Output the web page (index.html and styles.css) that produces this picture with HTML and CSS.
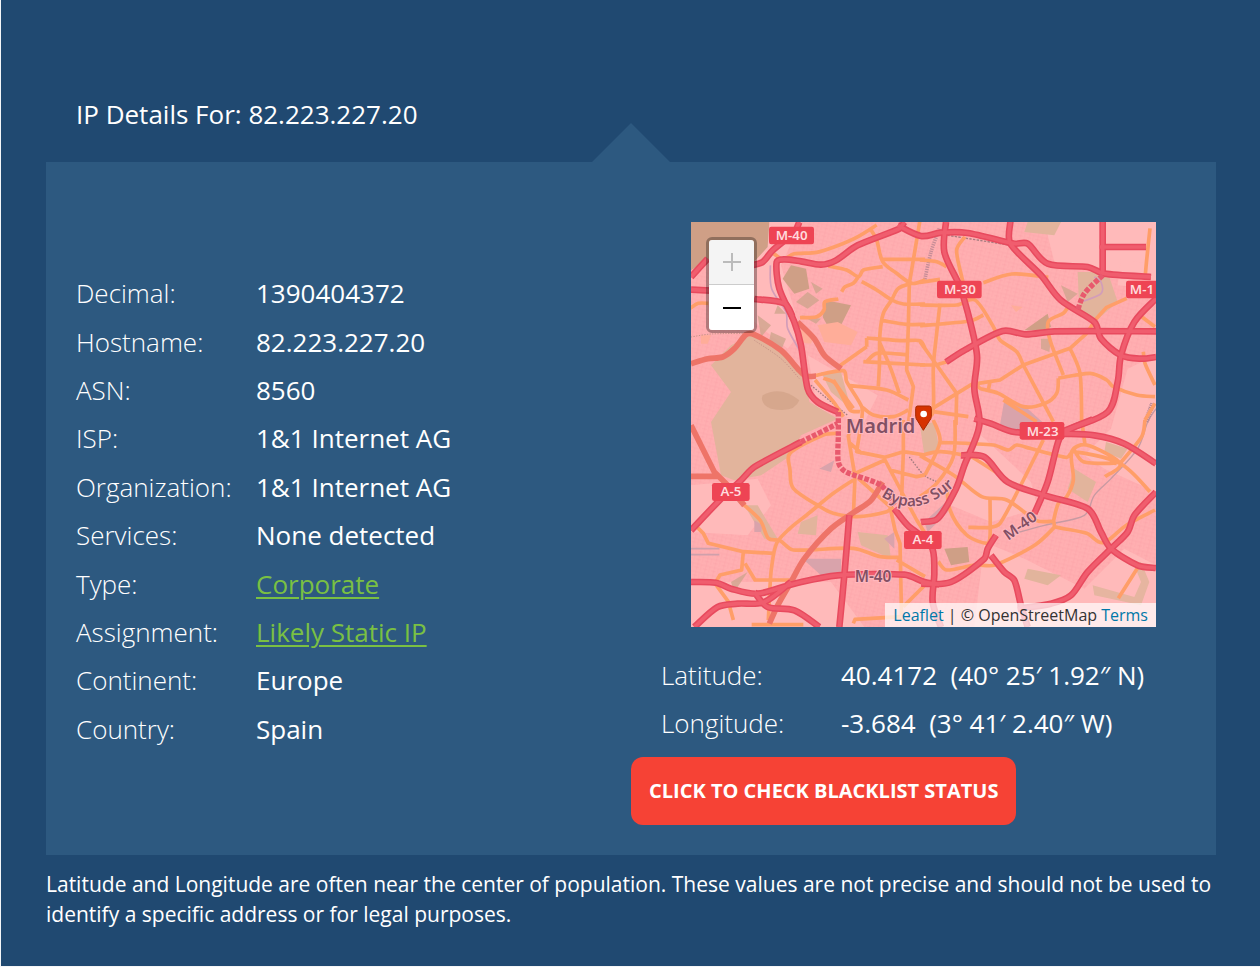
FILE: index.html
```html
<!DOCTYPE html>
<html lang="en">
<head>
<meta charset="utf-8">
<meta name="viewport" content="width=device-width, initial-scale=1">
<title>IP Details For: 82.223.227.20</title>
<link rel="stylesheet" href="styles.css">
</head>
<body>
<main class="page">
  <h1 class="title">IP Details For: 82.223.227.20</h1>
  <section class="panel">
    <dl class="details facts">
      <div class="row"><dt>Decimal:</dt><dd>1390404372</dd></div>
      <div class="row"><dt>Hostname:</dt><dd>82.223.227.20</dd></div>
      <div class="row"><dt>ASN:</dt><dd>8560</dd></div>
      <div class="row"><dt>ISP:</dt><dd>1&amp;1 Internet AG</dd></div>
      <div class="row"><dt>Organization:</dt><dd>1&amp;1 Internet AG</dd></div>
      <div class="row"><dt>Services:</dt><dd>None detected</dd></div>
      <div class="row"><dt>Type:</dt><dd><a href="#type">Corporate</a></dd></div>
      <div class="row"><dt>Assignment:</dt><dd><a href="#assignment">Likely Static IP</a></dd></div>
      <div class="row"><dt>Continent:</dt><dd>Europe</dd></div>
      <div class="row"><dt>Country:</dt><dd>Spain</dd></div>
    </dl>
    <div class="location">
      <div class="map">
        <svg class="tiles" viewBox="0 0 1395 1215" preserveAspectRatio="xMidYMid slice" role="img" aria-label="Map of Madrid">
          <defs>
            <pattern id="streets" width="26" height="24" patternUnits="userSpaceOnUse" patternTransform="rotate(14)">
              <path d="M0 6H26M0 17H14M8 0V24M20 6V24" fill="none" stroke="#f58f98" stroke-width="2" opacity=".3"/>
            </pattern>
          </defs>
          <rect width="1395" height="1215" fill="#ffafb1"/>
          <rect width="1395" height="1215" fill="url(#streets)"/>

          <!-- pale open land -->
          <g fill="#ffbaba">
            <path d="M190 0H330L270 130L330 330L290 380L190 300Z"/>
            <path d="M0 790L200 770L240 850L170 940L0 930Z"/>
            <path d="M0 1080L420 1080L520 1215H0Z"/>
            <path d="M1060 0H1395V170L1240 150L1090 120Z"/>
            <path d="M1310 440L1395 400V810L1240 740L1180 700L1260 620Z"/>
            <path d="M870 640L1020 780L1040 860L900 900L780 850Z"/>
            <path d="M880 960L1000 1010L1180 1100L1300 980L1395 1030V1215H850Z"/>
            <path d="M350 400L560 520L520 600L380 560Z"/>
            <path d="M1290 110L1395 130V200L1280 190Z"/>
          </g>

          <!-- parks and woods -->
          <g fill="#e2b49c">
            <path d="M120 370L190 335L280 390L345 465L355 540L440 590L330 640L300 700L210 760L130 775L90 760L60 600L120 510L60 430Z"/>
            <path d="M500 930L590 940L600 1010L510 970Z"/>
            <path d="M1160 150L1250 150L1280 240L1210 300L1165 270Z"/>
            <path d="M687 610L730 600L745 680L700 700Z"/>
            <path d="M1150 740L1215 780L1190 840L1130 800Z"/>
            <path d="M1010 1040L1110 1060L1070 1090L1000 1070Z"/>
            <path d="M1010 0H1110L1090 40L1000 30Z"/>
            <path d="M1245 660L1310 680L1290 710L1240 690Z"/>
            <path d="M390 450L450 450L480 560L420 510Z"/>
            <path d="M330 900L380 880L375 940L320 935Z"/>
            <path d="M160 850L200 850L260 950L220 950Z"/>
          </g>
          <path d="M1350 1020L1375 1080L1350 1150L1210 1120L1205 1090L1330 1125L1350 1080L1330 1030Z" fill="#e6b5a0"/>
          <g fill="#cf9f86">
            <path d="M0 0H235L230 75L180 130L90 110L40 120L0 145Z"/>
            <path d="M405 235L480 250L450 310L420 330L395 285Z"/>
            <path d="M300 130L345 140L355 200L310 215L275 170Z"/>
            <path d="M760 980L830 975L835 1020L780 1030Z"/>
            <path d="M1000 325L1070 275L1080 315L1050 325Z"/>
            <path d="M215 520Q270 490 325 535Q310 575 240 560Q205 545 215 520Z" opacity=".65"/>
          </g>
          <g fill="#d0a58e" opacity=".8">
            <path d="M200 280L240 310L210 345ZM240 330L285 350L270 385L235 355ZM315 240L350 210L385 235L350 260ZM330 280L390 290L375 305ZM260 250L285 275L250 275ZM360 180L395 200L375 215Z"/>
            <path d="M120 1080L170 1050L130 1110ZM1110 190L1160 215L1130 240ZM1050 350L1080 350L1075 390L1050 380Z"/>
          </g>
          <g fill="#d9a3ab">
            <path d="M335 1010L450 1010V1050L390 1060Z"/>
            <path d="M940 535L1010 560L1060 605L1020 635L925 620Z"/>
            <path d="M580 950L610 930L610 980Z"/>
            <path d="M700 900L775 830L770 870L710 930Z"/>
            <path d="M190 895L215 910L210 930L190 930ZM385 740L430 715L420 750Z"/>
          </g>
          <g fill="#ffad99">
            <path d="M380 310L440 300L500 330L480 370L400 360ZM320 320L370 340L360 365L320 360ZM960 250L995 255L975 270ZM30 340L60 340L50 365L30 365Z"/>
          </g>

          <!-- water and railways -->
          <g class="line">
            <path d="M238 130L242 200L285 270L290 320L335 400M1170 240L1230 215L1230 180L1210 165" stroke="#d29db9" stroke-width="5"/>
            <path d="M1395 560L1370 600L1340 680L1260 770L1210 820L1180 880L1060 910L950 940" stroke="#c79aa2" stroke-width="4"/>
            <path d="M745 20L720 90L700 180" stroke="#ae808d" stroke-width="11" stroke-dasharray="4 3" opacity=".7"/>
            <path d="M1385 545L1365 600" stroke="#ae808d" stroke-width="16" stroke-dasharray="3 3"/>
            <path d="M770 40L960 70" stroke="#a77c80" stroke-width="4" stroke-dasharray="7 4"/>
            <path d="M0 980H85M0 998H85" stroke="#d0a0ab" stroke-width="5"/>
            <path d="M655 705L700 760L740 780M360 490L470 580" stroke="#a77c80" stroke-width="4" stroke-dasharray="5 4"/>
            <path d="M190 355L270 410L325 470M0 345L60 336L180 334" stroke="#c79488" stroke-width="3" stroke-dasharray="4 4"/>
          </g>

          <!-- minor orange roads, drawn as four quadrants -->
          <g class="line minor">
            <g transform="translate(-3 -6)">
              <path d="M250 100L280 118L310 102L380 97L430 82L500 52L560 15"/>
              <path d="M540 25L560 60L578 125L620 160L665 190L705 180"/>
              <path d="M578 118H705M690 0L670 120L658 190L655 320L650 450L670 500L655 610"/>
              <path d="M415 138L470 150L505 170L520 150L578 140M505 170L490 190L465 200L455 215M515 185L560 210L605 240L640 252L705 252"/>
              <path d="M665 190L625 205L605 240L580 280L570 340L568 440L565 500M580 302L650 313L705 313M568 365L600 440L628 520"/>
              <path d="M330 293L380 290L402 270L405 245L445 237"/>
              <path d="M445 440L530 380M530 380L530 354M530 354L640 362L690 362L705 385M530 425L560 400L650 404M520 425L705 435"/>
              <path d="M375 467L460 452L470 485L515 560L515 600M480 497L590 510L655 540M375 480L430 545L460 590M400 475L435 490L480 570L510 575M430 480L450 510L490 565M515 560L550 585L610 590L655 570M0 265L25 250L55 250"/>
            </g>
            <g transform="translate(687 -6)">
              <path d="M135 50L110 90L125 170L130 190M0 120L50 125L80 140M0 187L60 178M190 188L275 162L385 172"/>
              <path d="M0 255L110 255L165 240L220 320L240 360L290 395L310 435L400 605M0 317L150 303L190 285M60 250L50 340L40 440L38 580L0 600"/>
              <path d="M0 365L50 435L110 520L108 615M0 435H48M48 435L80 425M38 565L155 493L240 480L310 435L450 385L500 340L530 295L560 262L620 235"/>
              <path d="M445 260L430 280L385 305L390 360L430 465M450 385L480 460L485 615M415 475L510 460L560 480L580 500L650 525L705 530M415 475L410 520L375 550L310 560L235 520L180 505L170 490M210 485L205 510M250 540L350 605M690 25L680 120L675 175M665 290L705 320M670 395L675 430L705 495M705 550L675 600M40 575L145 590"/>
            </g>
            <g transform="translate(-3 594)">
              <path d="M445 40L400 45L300 100L300 150L310 205L390 260L430 280L500 290L590 275L610 260"/>
              <path d="M490 180L430 220L350 285L300 325L260 370L245 440L240 500L235 600M150 245L210 300L235 355L270 362L310 390L490 385L570 410L630 412"/>
              <path d="M15 315L40 340L55 370L160 395L250 400M160 395L155 450L90 465L75 490L115 545L130 600M165 430L195 480L305 480M185 614H340M485 0L475 50L495 170L490 290M515 0L500 95L585 112L640 95L705 105M475 65L515 100M485 165L585 120L640 225L680 300L705 340M600 150L680 170L705 165M640 0L640 100L635 230M505 175L600 260L615 330L630 370L635 600M620 420L705 470M705 495L640 560M490 610L495 598L635 590"/>
            </g>
            <g transform="translate(687 594)">
              <path d="M0 107L60 95L120 103L150 108L260 178M0 107L100 165L185 230L260 240L350 302L400 305L405 320L500 340L550 368L620 315L705 270"/>
              <path d="M40 0L60 65L15 165M105 0L100 110L50 190L0 230M55 67L220 75L265 90L290 75L330 85L440 112L460 95L600 130L690 215M370 60L300 200L240 310L210 322L145 322M400 305L415 250L440 230L460 180L455 95L500 75L600 130L555 170M485 0L495 75M675 0L665 50L600 130M460 85L490 125L590 130M210 235L210 350L200 370L140 345L90 270L80 180M55 425L80 450L165 435L225 435L345 375L405 320M655 440L595 535"/>
            </g>
          </g>

          <!-- reddish secondary roads -->
          <g class="line secondary">
            <path d="M0 425L50 410L95 405L130 380L165 338L190 338L270 385L320 440L345 462L375 462"/>
            <path d="M320 300L370 350L400 400L450 440"/>
            <path d="M0 610L40 690L70 750L110 790L160 850M0 763H80"/>
            <path d="M575 780L540 835L490 870L420 920L340 1010L300 1080L260 1150L235 1205"/>
          </g>

          <!-- motorways: dark edge with a lighter middle -->
          <g class="line motorway-edge">
            <g id="motorways">
              <path d="M0 165L50 110M180 130L215 120L245 85L310 30L325 0M0 203L60 206M190 231L280 244L305 285"/>
              <path d="M440 570L380 540L350 500L330 370L310 300L265 200L257 120L280 112L330 118L390 128L435 115L500 70L625 20L640 0M620 10L690 42L750 32L830 33L970 65L1010 65L1070 125L1190 135L1240 155L1380 165"/>
              <path d="M765 0L760 90L805 190L830 270L858 400L850 500L865 610L820 730L795 800L740 890L690 900"/>
              <path d="M958 0L958 65L1050 160L1110 235L1210 300L1230 350L1290 400L1350 410L1395 405"/>
              <path d="M765 420L820 385L935 327L1005 337L1090 328L1395 328M1395 230L1330 300L1290 400L1280 480L1250 570L1140 620L1105 650L1070 780L1030 875M915 940L890 980L880 1010L780 1080L690 1085"/>
              <path d="M1235 0V155M1225 75H1365M1110 630L1205 592"/>
              <path d="M850 590L900 605L970 630L1105 635L1210 640L1300 665L1395 725M810 700L880 705L950 780L1060 820L1190 860L1230 930L1260 980L1340 1030L1395 1038"/>
              <path d="M1395 810L1330 880L1310 930L1260 980L1190 1050L1140 1120L1080 1145L980 1160M900 1000L940 1050L970 1075L990 1150L1010 1215"/>
              <path d="M0 925L100 820L150 775L190 735L330 660M0 1080L75 1082L120 1100L200 1115L310 1085L440 1060L640 1058L700 1080L745 1087M10 1215L80 1155L140 1145L220 1140L300 1080M190 1110L230 1155L310 1165L385 1215M475 880L460 1060L445 1215M610 860L650 910L720 970L730 1050L725 1140L750 1215"/>
            </g>
          </g>
          <use class="line motorway" href="#motorways"/>
          <g class="line tunnel">
            <path d="M330 660L440 605M442 570L442 640L442 720L465 750L570 790L610 850M1235 160L1180 215L1160 265"/>
          </g>

          <!-- road shields -->
          <g class="shield">
            <rect x="234" y="14" width="135" height="53" rx="7"/>
            <rect x="738" y="176" width="134" height="53" rx="7"/>
            <rect x="1305" y="176" width="110" height="53" rx="7"/>
            <rect x="986" y="600" width="134" height="53" rx="7"/>
            <rect x="63" y="783" width="113" height="54" rx="7"/>
            <rect x="639" y="927" width="113" height="54" rx="7"/>
          </g>
          <g class="shield-name">
            <text x="302" y="54">M-40</text>
            <text x="807" y="217">M-30</text>
            <text x="1353" y="217">M-1</text>
            <text x="1055" y="641">M-23</text>
            <text x="120" y="823">A-5</text>
            <text x="696" y="967">A-4</text>
          </g>
          <g class="street-name">
            <text x="491" y="1080">M-40</text>
            <text transform="translate(952 956) rotate(-36)" x="0" y="0">M-40</text>
            <path id="bypass" d="M570 822Q690 905 815 765" fill="none" stroke="none"/>
            <text><textPath href="#bypass">Bypass Sur</textPath></text>
          </g>
          <text class="city" x="464" y="632">Madrid</text>

          <!-- location pin -->
          <path d="M679 552H715Q721 552 721 560V583Q721 590 715 597L697 625L680 597Q674 590 674 583V560Q674 552 679 552Z" fill="#d63300" stroke="#a82900" stroke-width="3"/>
          <circle cx="698" cy="576" r="10" fill="#fff"/>
        </svg>
        <div class="zoom">
          <button type="button" disabled aria-label="Zoom in"><svg viewBox="0 0 20 20" aria-hidden="true"><path d="M1 10H19M10 1V19"/></svg></button>
          <button type="button" aria-label="Zoom out"><svg viewBox="0 0 20 20" aria-hidden="true"><path d="M1 10H19"/></svg></button>
        </div>
        <p class="credit"><a href="#leaflet">Leaflet</a> | © OpenStreetMap <a href="#terms">Terms</a></p>
      </div>
      <dl class="details">
        <div class="row"><dt>Latitude:</dt><dd>40.4172&nbsp; (40° 25′ 1.92″ N)</dd></div>
        <div class="row"><dt>Longitude:</dt><dd>-3.684&nbsp; (3° 41′ 2.40″ W)</dd></div>
      </dl>
      <button type="button" class="check">CLICK TO CHECK BLACKLIST STATUS</button>
    </div>
  </section>
  <p class="note">Latitude and Longitude are often near the center of population. These values are not precise and should not be used to identify a specific address or for legal purposes.</p>
</main>
<script src="map.js"></script>
</body>
</html>
```

FILE: map.js
```js
// Rounds the map's road polylines into curves through the same points.
function curve(points) {
  let d = "M" + points[0].join(" ");
  for (let i = 0; i < points.length - 1; i++) {
    const a = points[i - 1] || points[i];
    const b = points[i];
    const c = points[i + 1];
    const e = points[i + 2] || c;
    const limit = Math.hypot(c[0] - b[0], c[1] - b[1]) / 3;
    const handle = (from, to, at, sign) => {
      const dx = to[0] - from[0];
      const dy = to[1] - from[1];
      const length = Math.hypot(dx, dy) || 1;
      const reach = Math.min(length / 6, limit) * sign;
      return [at[0] + (dx / length) * reach, at[1] + (dy / length) * reach];
    };
    d += "C" + [...handle(a, c, b, 1), ...handle(b, e, c, -1), ...c].join(" ");
  }
  return d;
}

document.querySelectorAll(".line path").forEach((path) => {
  const d = path.getAttribute("d");
  if (/[HV]/.test(d)) return;
  const lines = d.split("M").filter(Boolean);
  path.setAttribute("d", lines.map((line) =>
    curve(line.split("L").map((pair) => pair.trim().split(" ").map(Number)))
  ).join(""));
});
```

FILE: styles.css
```css
* {
  box-sizing: border-box;
}

html {
  height: 100%;
  background: #f4f6f8;
}

body {
  margin: 0;
  min-height: 100%;
  padding: 0 0 1px 1px;
  display: flex;
  color: #fff;
  font-family: "Open Sans", "Noto Sans", sans-serif;
  font-size: 26px;
}

.page {
  flex: 1;
  padding: 90px 44px 36px 45px;
  background: #204971;
}

.title {
  margin: 0 30px 24px;
  font-size: 26px;
  font-weight: 400;
  line-height: 48px;
}

.panel {
  position: relative;
  display: grid;
  grid-template-columns: 1fr 1fr;
  padding: 60px 0 30px;
  background: #2d5980;
}

.panel::before {
  content: "";
  position: absolute;
  left: 50%;
  bottom: 100%;
  margin-left: -39px;
  border: 39px solid transparent;
  border-top: 0;
  border-bottom-color: #2d5980;
}

.details {
  margin: 0;
  padding: 0 30px;
  display: grid;
}

.facts {
  align-self: start;
  min-height: 484px;
  margin-top: 47px;
}

.row {
  display: grid;
  grid-template-columns: 180px 1fr;
  align-items: center;
  line-height: 48px;
}

dt {
  font-weight: 300;
}

dd {
  margin: 0;
}

.facts a {
  color: #7ac043;
  text-decoration-thickness: 2px;
  text-underline-offset: 3px;
}

.map {
  position: relative;
  margin: 0 60px 24px;
  aspect-ratio: 465 / 405;
  overflow: hidden;
}

.tiles {
  display: block;
  width: 100%;
  height: 100%;
}

.line {
  fill: none;
  stroke-linejoin: round;
}

.minor {
  stroke: #ff9e68;
  stroke-width: 11px;
}

.secondary {
  stroke: #ee7468;
  stroke-width: 17px;
}

.motorway-edge {
  stroke: #e84a5e;
  stroke-width: 20px;
}

/* The copied roads take their stroke from here */
#motorways {
  stroke: inherit;
}

.motorway {
  stroke: #f05d6e;
  stroke-width: 11px;
}

.tunnel {
  stroke: #e8596d;
  stroke-width: 16px;
  stroke-dasharray: 14px 5px;
}

.shield {
  fill: #ee4454;
}

.shield-name,
.street-name,
.city {
  font-family: "Noto Sans", sans-serif;
  font-weight: 600;
}

.shield-name {
  fill: #ffd9dc;
  font-size: 40px;
  text-anchor: middle;
}

.street-name,
.city {
  fill: #825064;
  stroke: #ffb9c0;
  stroke-width: 6px;
  paint-order: stroke;
}

.street-name {
  font-size: 46px;
}

.city {
  font-size: 60px;
}

.zoom {
  position: absolute;
  top: 15px;
  left: 15px;
  width: 51px;
  border: 3px solid rgb(0 0 0 / 30%);
  border-radius: 6px;
  background-clip: padding-box;
}

.zoom button {
  display: grid;
  place-items: center;
  width: 100%;
  height: 45px;
  padding: 0;
  border: 0;
  border-radius: 0 0 3px 3px;
  background: #fff;
  color: #000;
}

.zoom button:disabled {
  border-bottom: 1px solid #ccc;
  border-radius: 3px 3px 0 0;
  background: #f4f4f4;
  color: #bbb;
}

.zoom svg {
  width: 20px;
  height: 20px;
  fill: none;
  stroke: currentColor;
  stroke-width: 2px;
}

.credit {
  position: absolute;
  right: 0;
  bottom: 0;
  margin: 0;
  padding: 0 8px;
  background: rgb(255 255 255 / 70%);
  color: #333;
  font-size: 16px;
  line-height: 24px;
  white-space: nowrap;
}

.credit a {
  color: #0078a8;
  text-decoration: none;
}

.check {
  display: block;
  margin-top: 10px;
  padding: 20px 18px;
  border: 0;
  border-radius: 12px;
  background: #f64235;
  color: #fff;
  font: 700 20px/28px "Open Sans", "Noto Sans", sans-serif;
}

.note {
  margin: 14px 0 0;
  font-size: 21px;
  line-height: 30px;
}
```
